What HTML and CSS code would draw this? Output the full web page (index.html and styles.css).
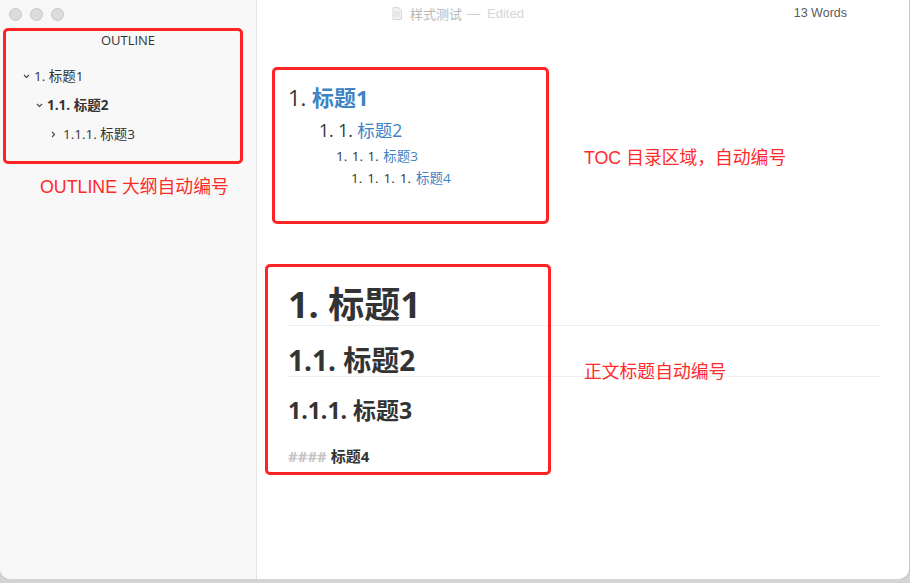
FILE: index.html
```html
<!DOCTYPE html>
<html lang="zh-CN">
  <head>
    <meta charset="UTF-8" />
    <meta name="viewport" content="width=device-width, initial-scale=1.0" />
    <title>样式测试</title>
    <link rel="stylesheet" href="styles.css">
  </head>

  <body>
    <div class="window">
      <div class="titlebar">
        <div class="lights">
          <span class="light"></span>
          <span class="light"></span>
          <span class="light"></span>
        </div>
        <div class="doc-title">
          <svg class="doc-icon" width="10" height="13" viewBox="0 0 10 13">
            <path d="M1 0.5h5.5l3 3v9h-8.5z" fill="#f2f2f2" stroke="#d6d6d6" />
            <path d="M2.5 5h5M2.5 7h5M2.5 9h5" stroke="#dadada" />
          </svg>
          <span class="doc-name">样式测试</span>
          <span class="doc-dash">—</span>
          <span class="doc-state">Edited</span>
        </div>
        <div class="words">13 Words</div>
      </div>

      <aside class="sidebar">
        <div class="outline-title">OUTLINE</div>
        <ul class="outline">
          <li class="lvl1">
            <svg class="chev" width="7" height="5" viewBox="0 0 7 5"><path d="M1 1l2.5 2.5L6 1" fill="none" stroke="#444" stroke-width="1.1" /></svg>
            1. 标题1
          </li>
          <li class="lvl2 active">
            <svg class="chev" width="7" height="5" viewBox="0 0 7 5"><path d="M1 1l2.5 2.5L6 1" fill="none" stroke="#444" stroke-width="1.1" /></svg>
            1.1. 标题2
          </li>
          <li class="lvl3">
            <svg class="chev" width="5" height="7" viewBox="0 0 5 7"><path d="M1 1l2.5 2.5L1 6" fill="none" stroke="#444" stroke-width="1.1" /></svg>
            1.1.1. 标题3
          </li>
        </ul>
      </aside>

      <main class="editor">
        <div class="toc">
          <div class="toc-h1">1. <a>标题1</a></div>
          <div class="toc-h2">1. 1. <a>标题2</a></div>
          <div class="toc-h3">1. 1. 1. <a>标题3</a></div>
          <div class="toc-h4">1. 1. 1. 1. <a>标题4</a></div>
        </div>

        <h1>1. 标题1</h1>
        <h2>1.1. 标题2</h2>
        <h3>1.1.1. 标题3</h3>
        <h4><span class="marks">####</span> 标题4</h4>
      </main>

      <!-- annotations drawn over the screenshot -->
      <div class="mark mark-outline"></div>
      <div class="mark mark-toc"></div>
      <div class="mark mark-heads"></div>
      <div class="note note-outline">OUTLINE 大纲自动编号</div>
      <div class="note note-toc">TOC 目录区域，自动编号</div>
      <div class="note note-heads">正文标题自动编号</div>
    </div>
  </body>
</html>
```

FILE: styles.css
```css
body {
  margin: 0;
  background-color: #d4d4d4;
  font-family: "Open Sans", "Noto Sans CJK SC", sans-serif;
  color: #333;
}

.window {
  position: relative;
  display: flex;
  width: 909px;
  height: 579px;
  background-color: white;
  border-radius: 0 0 10px 10px;
  box-shadow: 0 0 0 1px #c4c4c4;
  overflow: hidden;
}

.titlebar {
  position: absolute;
  top: 0;
  left: 0;
  right: 0;
  height: 28px;
  display: flex;
  align-items: center;
  font-family: "Liberation Sans", "Noto Sans CJK SC", sans-serif;
  font-size: 13px;
}

.lights {
  display: flex;
  gap: 8px;
  padding-left: 9px;
}

.light {
  width: 11px;
  height: 11px;
  border-radius: 50%;
  background-color: #dcdcdc;
  border: 0.5px solid #c6c6c6;
}

.doc-title {
  position: absolute;
  left: 392px;
  top: 4px;
  display: flex;
  align-items: center;
  gap: 5px;
}

.doc-name {
  color: #b8b8b8;
  margin-left: 3px;
}

.doc-dash {
  color: #cfcfcf;
  margin-right: 2px;
}

.doc-state {
  color: #d5d5d5;
}

.words {
  margin-left: auto;
  margin-right: 62px;
  margin-top: -2px;
  color: #5a5a5a;
  font-size: 12.5px;
}

.sidebar {
  width: 257px;
  flex-shrink: 0;
  background-color: #f8f8f8;
  border-right: 1px solid #e4e4e4;
  padding-top: 30px;
  box-sizing: border-box;
}

.outline-title {
  text-align: center;
  font-size: 13px;
  line-height: 20px;
  color: #333;
}

.outline {
  list-style: none;
  margin: 12px 0 0;
  padding: 0;
  font-size: 13.5px;
  color: #333;
}

.outline li {
  line-height: 29px;
  display: flex;
  align-items: center;
}

.outline .chev {
  margin-right: 4px;
}

.outline .lvl1 {
  padding-left: 23px;
}

.outline .lvl2 {
  padding-left: 36px;
}

.outline .lvl3 {
  padding-left: 51px;
}

.outline .lvl3 .chev {
  margin-right: 7px;
}

.outline .active {
  font-weight: bold;
}

.editor {
  flex: 1;
  padding: 81px 29px 0 31px;
}

.toc a {
  color: #4183c4;
}

.toc-h1 {
  font-size: 22px;
  line-height: 32px;
}

.toc-h1 a {
  font-weight: bold;
}

.toc-h2 {
  font-size: 17.5px;
  line-height: 30px;
  margin-top: 2px;
  padding-left: 31px;
}

.toc-h3 {
  font-size: 13.5px;
  line-height: 22px;
  padding-left: 48px;
  word-spacing: 1px;
}

.toc-h4 {
  font-size: 13.5px;
  line-height: 22px;
  padding-left: 63px;
  word-spacing: 1.5px;
}

h1,
h2,
h3,
h4 {
  margin: 0;
  font-weight: bold;
  color: #333;
}

h1 {
  margin-top: 96px;
  font-size: 36px;
  line-height: 40px;
  border-bottom: 1px solid #eee;
}

h2 {
  margin-top: 18px;
  font-size: 28px;
  line-height: 32px;
  border-bottom: 1px solid #eee;
}

h3 {
  margin-top: 18px;
  font-size: 23px;
  line-height: 30px;
}

h4 {
  margin-top: 20px;
  font-size: 15px;
  line-height: 22px;
}

h4 .marks {
  color: #c4c4c4;
}

.mark {
  position: absolute;
  border: 3px solid #fe2424;
  border-radius: 5px;
  box-sizing: border-box;
}

.mark-outline {
  left: 3px;
  top: 28px;
  width: 240px;
  height: 136px;
}

.mark-toc {
  left: 272px;
  top: 67px;
  width: 277px;
  height: 157px;
}

.mark-heads {
  left: 265px;
  top: 264px;
  width: 286px;
  height: 211px;
}

.note {
  position: absolute;
  color: #ff2a2a;
  font-family: "Liberation Sans", "Noto Sans CJK SC", sans-serif;
  font-size: 17.8px;
  line-height: 22px;
}

.note-outline {
  left: 40px;
  top: 176px;
}

.note-toc {
  left: 584px;
  top: 147px;
}

.note-heads {
  left: 584px;
  top: 361px;
}
```
